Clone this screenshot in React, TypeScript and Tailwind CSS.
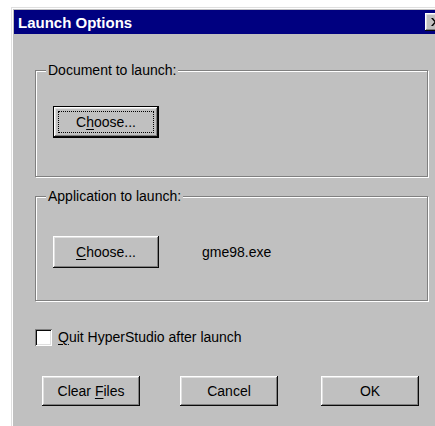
import React from 'react';

const raised =
  'shadow-[inset_-1px_-1px_0_#0a0a0a,inset_1px_1px_0_#ffffff,inset_-2px_-2px_0_#808080,inset_2px_2px_0_#dfdfdf]';

const Key = ({ children }: { children: React.ReactNode }) => (
  <span className="underline underline-offset-[2px]">{children}</span>
);

const Button = ({
  children,
  className = '',
  isDefault = false,
}: {
  children: React.ReactNode;
  className?: string;
  isDefault?: boolean;
}) => {
  if (isDefault) {
    return (
      <div className={`border border-black ${className}`}>
        <div className={`flex h-full w-full items-center justify-center bg-[#c0c0c0] p-[4px] ${raised}`}>
          <div className="flex h-full w-full items-center justify-center border border-dotted border-black">
            {children}
          </div>
        </div>
      </div>
    );
  }
  return (
    <div className={`flex items-center justify-center bg-[#c0c0c0] ${raised} ${className}`}>
      {children}
    </div>
  );
};

const GroupBox = ({
  label,
  className = '',
  children,
}: {
  label: string;
  className?: string;
  children: React.ReactNode;
}) => (
  <div
    className={`relative ml-[21px] w-[393px] border border-[#808080] shadow-[inset_1px_1px_0_#ffffff,1px_1px_0_#ffffff] ${className}`}
  >
    <span className="absolute left-[10px] top-[-9px] bg-[#c0c0c0] px-[2px] leading-[16px]">{label}</span>
    {children}
  </div>
);

export default function App() {
  return (
    <div className="relative h-[426px] w-[435px] overflow-hidden bg-white font-['Liberation_Sans',Arial,sans-serif] text-[14px] text-black">
      {/* Dialog window frame */}
      <div className="ml-[11px] mt-[7px] h-[430px] w-[438px] border-l border-t border-[#dfdfdf] bg-[#c0c0c0]">
        <div className="h-full w-full border-l border-t border-white p-[1px]">
          {/* Title bar */}
          <div className="flex h-[24px] items-center bg-[#000080] pl-[4px] pr-[2px]">
            <span className="flex-1 text-[15px] font-bold leading-none text-white">Launch Options</span>
            <div className={`flex h-[18px] w-[21px] items-center justify-center bg-[#c0c0c0] ${raised}`}>
              <svg width="9" height="8" viewBox="0 0 9 8">
                <path d="M0 0h2l2.5 3 2.5-3h2L5.5 4 9 8H7L4.5 5 2 8H0l3.5-4z" fill="#000" />
              </svg>
            </div>
          </div>

          {/* Document group */}
          <GroupBox label="Document to launch:" className="mt-[36px] h-[107px] pl-[17px] pt-[35px]">
            <Button isDefault className="h-[32px] w-[106px]">
              <span>
                C<Key>h</Key>oose...
              </span>
            </Button>
          </GroupBox>

          {/* Application group */}
          <GroupBox label="Application to launch:" className="mt-[19px] h-[105px] pl-[17px] pt-[39px]">
            <div className="flex items-center">
              <Button className="h-[32px] w-[106px]">
                <span>
                  <Key>C</Key>hoose...
                </span>
              </Button>
              <span className="ml-[43px]">gme98.exe</span>
            </div>
          </GroupBox>

          {/* Quit checkbox */}
          <div className="ml-[21px] mt-[28px] flex items-center">
            <div className="h-[17px] w-[17px] bg-white shadow-[inset_1px_1px_0_#808080,inset_-1px_-1px_0_#ffffff,inset_2px_2px_0_#0a0a0a,inset_-2px_-2px_0_#dfdfdf]" />
            <span className="ml-[6px] leading-[17px]">
              <Key>Q</Key>uit HyperStudio after launch
            </span>
          </div>

          {/* Footer buttons */}
          <div className="ml-[28px] mt-[30px] flex">
            <Button className="h-[30px] w-[98px]">
              <span>
                Clear <Key>F</Key>iles
              </span>
            </Button>
            <Button className="ml-[40px] h-[30px] w-[98px]">Cancel</Button>
            <Button className="ml-[43px] h-[30px] w-[98px]">OK</Button>
          </div>
        </div>
      </div>
    </div>
  );
}
